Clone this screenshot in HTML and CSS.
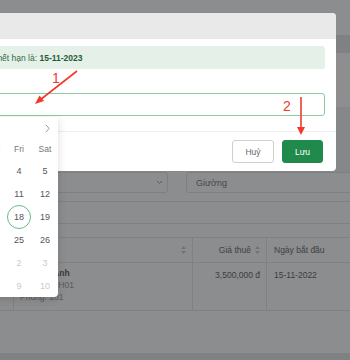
FILE: index.html
```html
<!DOCTYPE html>
<html lang="vi">
<head>
    <meta charset="UTF-8">
    <meta name="viewport" content="width=device-width, initial-scale=1.0">
    <title>Gia hạn hợp đồng</title>
    <link rel="stylesheet" href="styles.css">
</head>
<body>
    <div class="page">
        <div class="page-top"></div>
        <div class="page-bar"></div>
        <div class="page-info"></div>
        <div class="page-title"></div>

        <div class="filters">
            <div class="select">
                <svg width="7" height="5" viewBox="0 0 7 5"><path d="M1 1l2.5 2.5L6 1" fill="none" stroke="currentColor" stroke-width="1"/></svg>
            </div>
            <div class="field">Giường</div>
        </div>

        <div class="summary"></div>

        <div class="grid">
            <div class="cell head"></div>
            <div class="cell head end">
                <svg class="sorter" width="5" height="8" viewBox="0 0 5 8"><path d="M2.5 0L5 3H0zM2.5 8L0 5h5z"/></svg>
            </div>
            <div class="cell head end">Giá thuê
                <svg class="sorter" width="5" height="8" viewBox="0 0 5 8"><path d="M2.5 0L5 3H0zM2.5 8L0 5h5z"/></svg>
            </div>
            <div class="cell head">Ngày bắt đầu</div>

            <div class="cell"></div>
            <div class="cell tenant">
                <div class="name">Nguyễn Anh</div>
                <div class="sub">Căn hộ: CH01</div>
                <div class="sub">Phòng: 101</div>
            </div>
            <div class="cell end">3,500,000 đ</div>
            <div class="cell">15-11-2022</div>
        </div>

        <div class="page-foot"></div>
    </div>

    <div class="mask"></div>

    <div class="modal">
        <div class="modal-head"></div>
        <div class="modal-body">
            <div class="notice">Hợp đồng thuê phòng này sẽ hết hạn là:&nbsp;<b>15-11-2023</b></div>
            <div class="date-input"></div>
        </div>
        <div class="modal-foot">
            <button class="btn btn-cancel">Huỷ</button>
            <button class="btn btn-save">Lưu</button>
        </div>
    </div>

    <div class="picker">
        <div class="picker-head">
            <svg width="5" height="9" viewBox="0 0 5 9"><path d="M0.8 0.8l3.4 3.7-3.4 3.7" fill="none" stroke="#999" stroke-width="1"/></svg>
        </div>
        <div class="weekdays">
            <span>Sun</span><span>Mon</span><span>Tue</span><span>Wed</span><span>Thu</span><span>Fri</span><span>Sat</span>
        </div>
        <div class="days">
            <span class="muted">30</span><span class="muted">31</span><span>1</span><span>2</span><span>3</span><span>4</span><span>5</span>
            <span>6</span><span>7</span><span>8</span><span>9</span><span>10</span><span>11</span><span>12</span>
            <span>13</span><span>14</span><span>15</span><span>16</span><span>17</span><span class="today">18</span><span>19</span>
            <span>20</span><span>21</span><span>22</span><span>23</span><span>24</span><span>25</span><span>26</span>
            <span>27</span><span>28</span><span>29</span><span>30</span><span class="muted">1</span><span class="muted">2</span><span class="muted">3</span>
            <span class="muted">4</span><span class="muted">5</span><span class="muted">6</span><span class="muted">7</span><span class="muted">8</span><span class="muted">9</span><span class="muted">10</span>
        </div>
    </div>

    <svg class="marks" width="350" height="360" viewBox="0 0 350 360">
        <line x1="77" y1="71" x2="40" y2="100" stroke="#ee3b2b" stroke-width="1.6"/>
        <polygon points="35,104 39.5,95.5 44,101" fill="#ee3b2b"/>
        <text x="52" y="83" class="mark-num">1</text>
        <line x1="301" y1="97" x2="301" y2="129" stroke="#ee3b2b" stroke-width="1.6"/>
        <polygon points="301,135 297,127 305,127" fill="#ee3b2b"/>
        <text x="283" y="111" class="mark-num">2</text>
    </svg>
</body>
</html>
```

FILE: styles.css
```css
body {
    margin: 0;
    width: 350px;
    height: 360px;
    overflow: hidden;
    position: relative;
    font-family: "Liberation Sans", Arial, sans-serif;
    font-size: 8.5px;
}
.page {
    background: #f9fcff;
    height: 360px;
    display: flex;
    flex-direction: column;
}
.page-top {
    height: 35px;
}
.page-bar {
    height: 18px;
    background: #e3e6ea;
}
.page-info {
    height: 54px;
    background: #fdfeff;
}
.page-title {
    height: 65px;
    background: #eef1f4;
}
.filters {
    display: flex;
    height: 21px;
    margin: 0 -20px 0 -10px;
}
.select {
    flex: 0 0 178px;
    box-sizing: border-box;
    border: 1px solid #dfe2e6;
    border-radius: 3px;
    display: flex;
    align-items: center;
    justify-content: flex-end;
    padding-right: 4px;
    color: #a3a6aa;
}
.field {
    flex: 1;
    margin-left: 18px;
    box-sizing: border-box;
    border: 1px solid #dfe2e6;
    border-radius: 3px;
    padding-left: 9px;
    display: flex;
    align-items: center;
    color: #7d8185;
    font-size: 9px;
}
.summary {
    margin-top: 8px;
    height: 21px;
    border-top: 1px solid #e3e6ea;
    border-bottom: 1px solid #e3e6ea;
}
.grid {
    margin-top: 13px;
    display: grid;
    grid-template-columns: 13px 180px 74px 1fr;
    border-top: 1px solid #e3e6ea;
}
.cell {
    border-bottom: 1px solid #e3e6ea;
    border-right: 1px solid #e3e6ea;
    padding: 7px 6px 0 7px;
    color: #6b6f73;
    height: 48px;
    box-sizing: border-box;
}
.cell:nth-child(4n) {
    border-right: none;
}
.cell.head {
    height: 25px;
    padding-top: 0;
    display: flex;
    align-items: center;
    color: #71757a;
}
.cell.end {
    text-align: right;
    justify-content: flex-end;
}
.cell.tenant {
    padding-top: 4px;
}
.sorter {
    margin-left: 4px;
    fill: #c8ccd0;
}
.tenant .name {
    color: #666a6e;
    font-weight: bold;
    line-height: 12px;
}
.tenant .sub {
    color: #a0a4a8;
    line-height: 12px;
}
.page-foot {
    margin-top: auto;
    height: 7px;
    background: #e4e7ea;
}
.mask {
    position: absolute;
    inset: 0;
    background: rgba(0, 0, 0, 0.44);
}
.modal {
    position: absolute;
    top: 13px;
    left: -150px;
    width: 486px;
    background: #fff;
    border-radius: 4px;
}
.modal-head {
    height: 26px;
    background: #e9e9e9;
    border-radius: 4px 4px 0 0;
}
.modal-body {
    padding: 7px 11px 15px 11px;
}
.notice {
    height: 23px;
    background: #e5f0e9;
    border-radius: 3px;
    display: flex;
    align-items: center;
    padding-left: 24px;
    color: #2f6e47;
    white-space: nowrap;
}
.notice b {
    color: #1f5c37;
}
.date-input {
    margin-top: 24px;
    height: 23px;
    box-sizing: border-box;
    border: 1px solid #8fcaa5;
    border-radius: 3px;
}
.modal-foot {
    border-top: 1px solid #efefef;
    padding: 8px 13px 8px;
    display: flex;
    justify-content: flex-end;
    gap: 8px;
}
.btn {
    height: 23px;
    width: 42px;
    padding: 0;
    border-radius: 3px;
    font-family: inherit;
    font-size: 8.5px;
}
.btn-cancel {
    background: #fff;
    border: 1px solid #cfcfcf;
    color: #666;
}
.btn-save {
    width: 41px;
    background: #1f8a4c;
    border: 1px solid #1f8a4c;
    color: #fff;
}
.picker {
    position: absolute;
    top: 117px;
    left: -124px;
    width: 182px;
    height: 180px;
    background: #fff;
    border-radius: 0 0 4px 0;
    box-shadow: 0 2px 8px rgba(0, 0, 0, 0.15);
}
.picker-head {
    height: 22px;
    display: flex;
    align-items: center;
    justify-content: flex-end;
    padding-right: 8px;
}
.weekdays, .days {
    display: grid;
    grid-template-columns: repeat(7, 26px);
}
.weekdays span {
    height: 20px;
    line-height: 20px;
    text-align: center;
    color: #777;
    font-size: 8.5px;
}
.days span {
    height: 23px;
    display: flex;
    align-items: center;
    justify-content: center;
    color: #555;
    font-size: 9px;
}
.days .muted {
    color: #cacaca;
}
.days .today {
    position: relative;
}
.days .today::before {
    content: "";
    position: absolute;
    width: 22px;
    height: 22px;
    border: 1px solid #67b88c;
    border-radius: 50%;
}
.marks {
    position: absolute;
    top: 0;
    left: 0;
    pointer-events: none;
}
.mark-num {
    fill: #ee3b2b;
    font-family: "Liberation Sans", Arial, sans-serif;
    font-size: 14px;
}
```
